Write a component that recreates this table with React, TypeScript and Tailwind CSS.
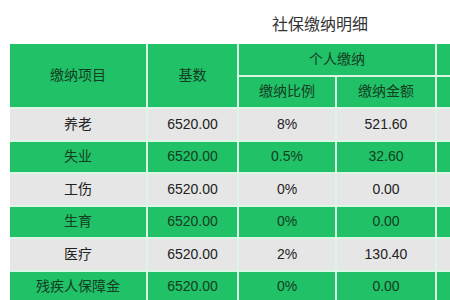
import React from "react";

const G = "bg-[#21c168] text-[#143d22]";
const W = "bg-[#e6e6e6] text-[#222222]";

const rows = [
  ["养老", "6520.00", "8%", "521.60"],
  ["失业", "6520.00", "0.5%", "32.60"],
  ["工伤", "6520.00", "0%", "0.00"],
  ["生育", "6520.00", "0%", "0.00"],
  ["医疗", "6520.00", "2%", "130.40"],
  ["残疾人保障金", "6520.00", "0%", "0.00"],
];

export default function App() {
  return (
    <div
      className="w-[450px] h-[300px] overflow-hidden bg-white"
      style={{ fontFamily: '"Liberation Sans", "Noto Sans CJK SC", sans-serif' }}
    >
      <div className="ml-[10px] w-[620px]">
        <div className="h-[44px] pt-[14px] text-center text-[16px] leading-[22px] text-[#333333]">
          社保缴纳明细
        </div>
        <div className="grid grid-cols-[136px_89px_96px_98px_96px_99px] grid-rows-[repeat(8,30.5px)] gap-[2px] bg-[#dcf6e6] text-[14px]">
          <div className={`${G} row-span-2 flex items-center justify-center`}>缴纳项目</div>
          <div className={`${G} row-span-2 flex items-center justify-center`}>基数</div>
          <div className={`${G} col-span-2 flex items-center justify-center`}>个人缴纳</div>
          <div className={`${G} col-span-2`} />
          <div className={`${G} flex items-center justify-center`}>缴纳比例</div>
          <div className={`${G} flex items-center justify-center`}>缴纳金额</div>
          <div className={G} />
          <div className={G} />
          {rows.map((r, i) => {
            const c = i % 2 === 0 ? W : G;
            return (
              <React.Fragment key={i}>
                {r.map((v, j) => (
                  <div key={j} className={`${c} flex items-center justify-center`}>
                    {v}
                  </div>
                ))}
                <div className={c} />
                <div className={c} />
              </React.Fragment>
            );
          })}
        </div>
      </div>
    </div>
  );
}
